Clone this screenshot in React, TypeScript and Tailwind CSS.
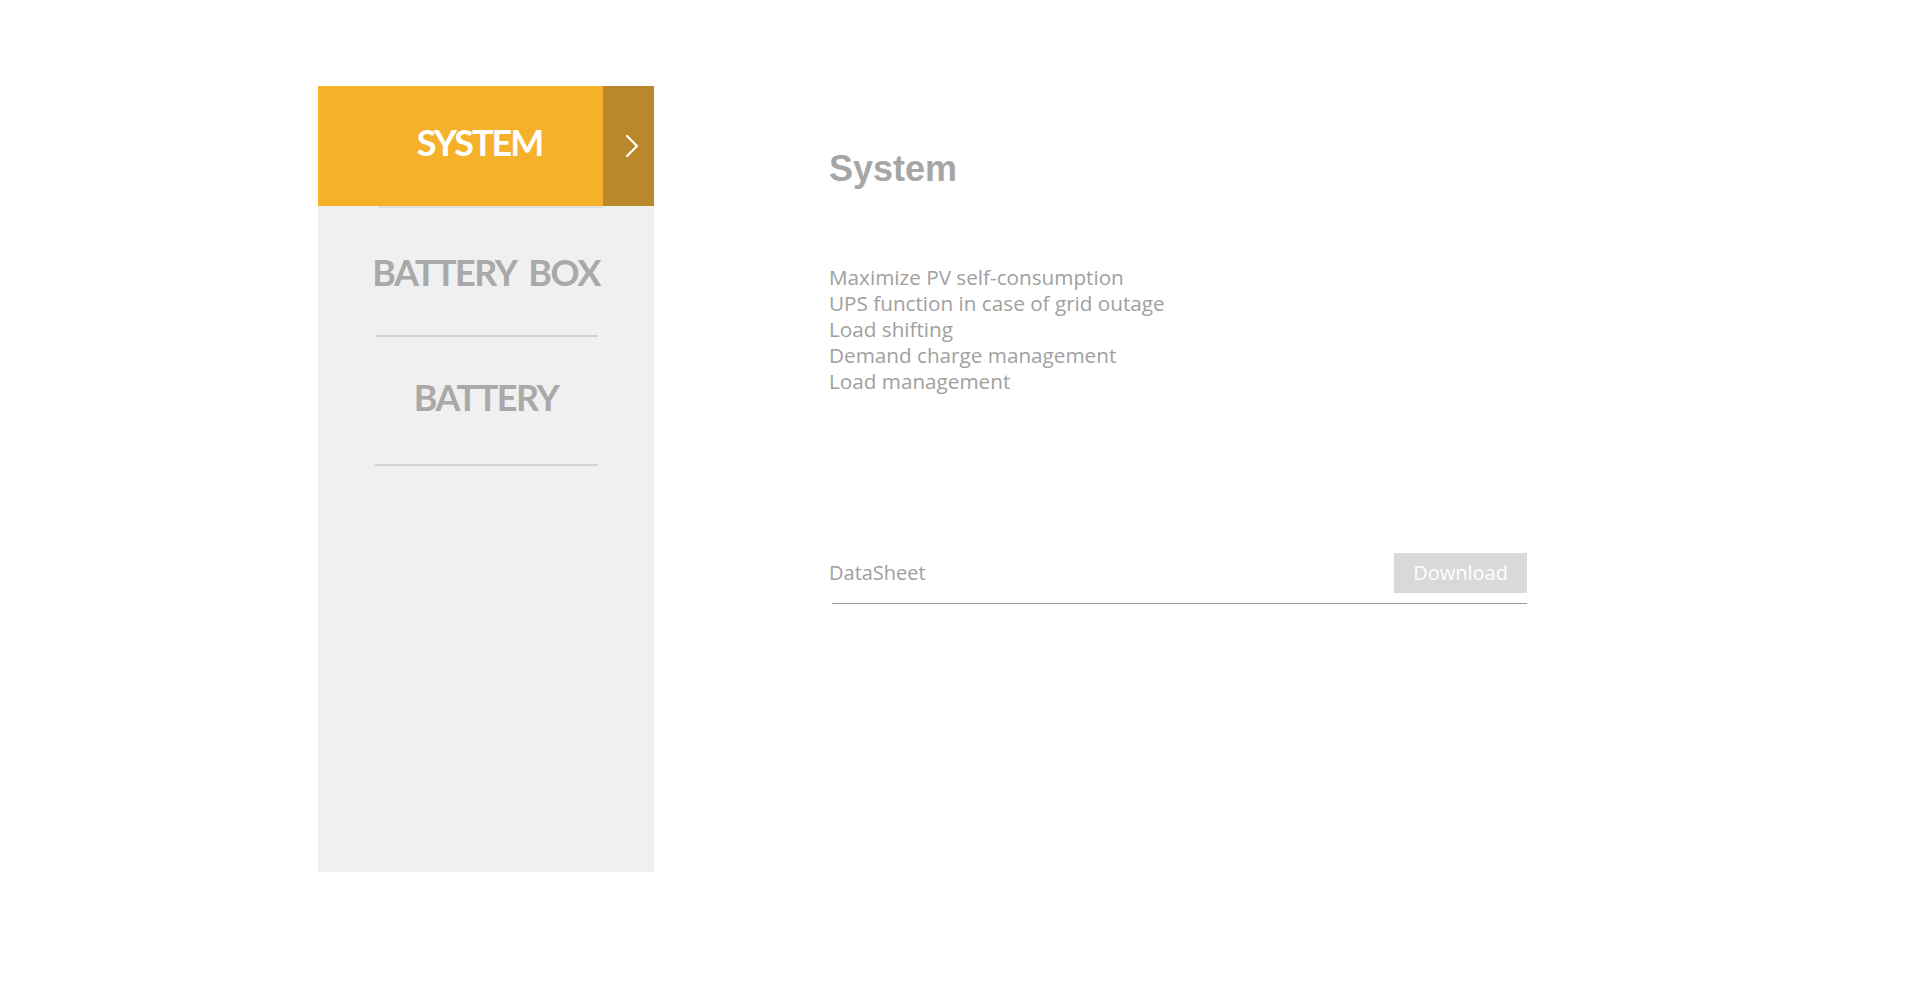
import { useState } from "react";

const tabs = ["SYSTEM", "BATTERY BOX", "BATTERY"];

const features = [
  "Maximize PV self-consumption",
  "UPS function in case of grid outage",
  "Load shifting",
  "Demand charge management",
  "Load management",
];

function Chevron() {
  return (
    <svg width="14" height="24" viewBox="0 0 14 24" fill="none">
      <polyline
        points="2,2 12,12 2,22"
        stroke="#ffffff"
        strokeWidth="2.2"
        strokeLinecap="round"
        strokeLinejoin="round"
      />
    </svg>
  );
}

export default function App() {
  const [active, setActive] = useState(0);

  return (
    <div className="min-h-[1000px] w-full bg-white">
      <div className="flex pl-[318px] pt-[86px]">
        {/* menu lateral */}
        <div className="flex h-[786px] w-[336px] flex-col bg-[#f0f0f0]">
          {tabs.map((t, i) =>
            i === active ? (
              <div key={t} className="flex flex-col">
                <div className="flex h-[120px]">
                  <div className="flex flex-1 items-center justify-center bg-[#f6b12b] pb-[8px] pl-[38px]">
                    <span className="font-['Lato',sans-serif] text-[36px] font-bold leading-none tracking-[-2px] text-white">
                      {t}
                    </span>
                  </div>
                  <div className="flex w-[51px] items-center justify-center bg-[#b8882a] pl-[6px]">
                    <Chevron />
                  </div>
                </div>
                <div className="ml-[60px] h-[2px] w-[225px] bg-[#dedede]" />
              </div>
            ) : (
              <button
                key={t}
                onClick={() => setActive(i)}
                className="flex flex-col items-center"
              >
                <div
                  className={
                    i === 1
                      ? "flex h-[127px] items-center"
                      : "flex h-[127px] items-center pb-[8px]"
                  }
                >
                  <span className="font-['Lato',sans-serif] text-[36px] font-bold leading-none tracking-[-1.5px] text-[#a9a9a9] [word-spacing:6px]">
                    {t}
                  </span>
                </div>
                <div className="h-[2px] w-[223px] bg-[#d4d4d4]" />
              </button>
            )
          )}
        </div>

        {/* contenido */}
        <div className="ml-[175px] flex w-[698px] flex-col pt-[65px]">
          <h1 className="font-['Liberation_Sans',Arial,sans-serif] text-[36px] font-bold leading-none text-[#a6a6a6]">
            System
          </h1>

          <ul className="mt-[77px] font-['Open_Sans',sans-serif] text-[20.7px] leading-[26px] text-[#a0a0a0]">
            {features.map((f) => (
              <li key={f}>{f}</li>
            ))}
          </ul>

          <div className="mt-[159px] flex flex-col">
            <div className="flex items-center justify-between">
              <span className="font-['Open_Sans',sans-serif] text-[20px] text-[#a0a0a0]">
                DataSheet
              </span>
              <button className="flex h-[40px] w-[133px] items-center justify-center bg-[#d9d9d9] font-['Open_Sans',sans-serif] text-[20px] text-white">
                Download
              </button>
            </div>
            <div className="ml-[3px] mt-[10px] h-px bg-[#999999]" />
          </div>
        </div>
      </div>
    </div>
  );
}
